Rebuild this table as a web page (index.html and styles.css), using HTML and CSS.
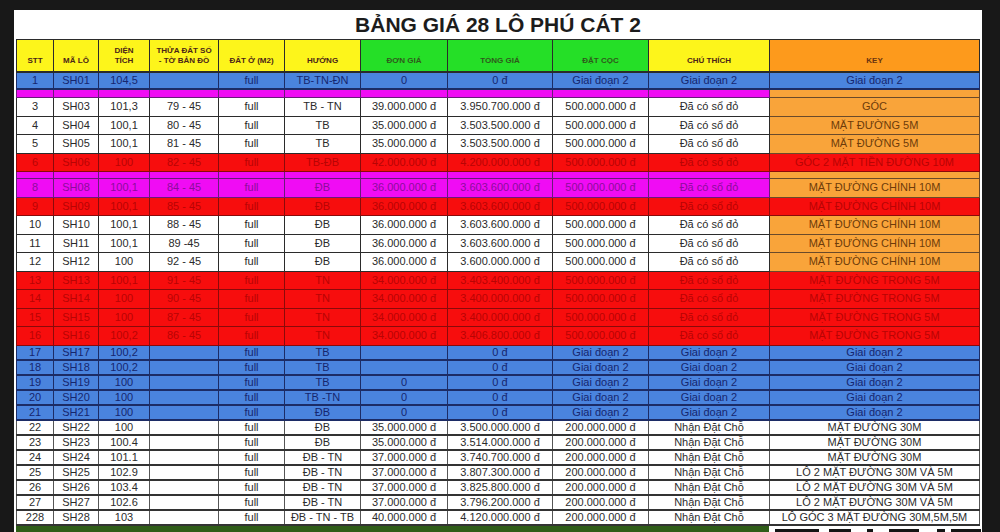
FILE: index.html
```html
<!DOCTYPE html>
<html lang="vi">
<head>
<meta charset="utf-8">
<title>Bảng giá 28 lô Phú Cát 2</title>
<link rel="stylesheet" href="styles.css">
</head>
<body>
<div class="sheet">
  <div class="title">BẢNG GIÁ 28 LÔ PHÚ CÁT 2</div>
  <table class="grid">
    <colgroup>
      <col style="width:37px"><col style="width:45px"><col style="width:51px"><col style="width:69px"><col style="width:66px"><col style="width:76px"><col style="width:87px"><col style="width:105px"><col style="width:96px"><col style="width:121px"><col style="width:210px">
    </colgroup>
    <thead>
      <tr class="head">
        <th class="hy">STT</th>
        <th class="hy">MÃ LÔ</th>
        <th class="hy">DIỆN<br>TÍCH</th>
        <th class="hy">THỬA ĐẤT SỐ<br>- TỜ BẢN ĐỒ</th>
        <th class="hy">ĐẤT Ở (M2)</th>
        <th class="hy">HƯỚNG</th>
        <th class="hg">ĐƠN GIÁ</th>
        <th class="hg">TỔNG GIÁ</th>
        <th class="hg">ĐẶT CỌC</th>
        <th class="hy">CHÚ THÍCH</th>
        <th class="ho">KEY</th>
      </tr>
    </thead>
    <tbody>
      <tr class="blue r17"><td>1</td><td>SH01</td><td>104,5</td><td></td><td>full</td><td>TB-TN-ĐN</td><td>0</td><td>0 đ</td><td>Giai đoạn 2</td><td>Giai đoạn 2</td><td>Giai đoạn 2</td></tr>
      <tr class="purple thin9"><td></td><td></td><td></td><td></td><td></td><td></td><td></td><td></td><td></td><td></td><td class="k-orange"></td></tr>
      <tr class="white mid"><td>3</td><td>SH03</td><td>101,3</td><td>79 - 45</td><td>full</td><td>TB - TN</td><td>39.000.000 đ</td><td>3.950.700.000 đ</td><td>500.000.000 đ</td><td>Đã có sổ đỏ</td><td class="k-orange">GÓC</td></tr>
      <tr class="white mid"><td>4</td><td>SH04</td><td>100,1</td><td>80 - 45</td><td>full</td><td>TB</td><td>35.000.000 đ</td><td>3.503.500.000 đ</td><td>500.000.000 đ</td><td>Đã có sổ đỏ</td><td class="k-orange">MẶT ĐƯỜNG 5M</td></tr>
      <tr class="white mid"><td>5</td><td>SH05</td><td>100,1</td><td>81 - 45</td><td>full</td><td>TB</td><td>35.000.000 đ</td><td>3.503.500.000 đ</td><td>500.000.000 đ</td><td>Đã có sổ đỏ</td><td class="k-orange">MẶT ĐƯỜNG 5M</td></tr>
      <tr class="red mid"><td>6</td><td>SH06</td><td>100</td><td>82 - 45</td><td>full</td><td>TB-ĐB</td><td>42.000.000 đ</td><td>4.200.000.000 đ</td><td>500.000.000 đ</td><td>Đã có sổ đỏ</td><td>GÓC 2 MẶT TIỀN ĐƯỜNG 10M</td></tr>
      <tr class="purple thin7"><td></td><td></td><td></td><td></td><td></td><td></td><td></td><td></td><td></td><td></td><td class="k-orange"></td></tr>
      <tr class="purple mid"><td>8</td><td>SH08</td><td>100,1</td><td>84 - 45</td><td>full</td><td>ĐB</td><td>36.000.000 đ</td><td>3.603.600.000 đ</td><td>500.000.000 đ</td><td>Đã có sổ đỏ</td><td class="k-orange">MẶT ĐƯỜNG CHÍNH 10M</td></tr>
      <tr class="red mid"><td>9</td><td>SH09</td><td>100,1</td><td>85 - 45</td><td>full</td><td>ĐB</td><td>36.000.000 đ</td><td>3.603.600.000 đ</td><td>500.000.000 đ</td><td>Đã có sổ đỏ</td><td>MẶT ĐƯỜNG CHÍNH 10M</td></tr>
      <tr class="white mid"><td>10</td><td>SH10</td><td>100,1</td><td>88 - 45</td><td>full</td><td>ĐB</td><td>36.000.000 đ</td><td>3.603.600.000 đ</td><td>500.000.000 đ</td><td>Đã có sổ đỏ</td><td class="k-orange">MẶT ĐƯỜNG CHÍNH 10M</td></tr>
      <tr class="white mid"><td>11</td><td>SH11</td><td>100,1</td><td>89 -45</td><td>full</td><td>ĐB</td><td>36.000.000 đ</td><td>3.603.600.000 đ</td><td>500.000.000 đ</td><td>Đã có sổ đỏ</td><td class="k-orange">MẶT ĐƯỜNG CHÍNH 10M</td></tr>
      <tr class="white mid"><td>12</td><td>SH12</td><td>100</td><td>92 - 45</td><td>full</td><td>ĐB</td><td>36.000.000 đ</td><td>3.600.000.000 đ</td><td>500.000.000 đ</td><td>Đã có sổ đỏ</td><td class="k-orange">MẶT ĐƯỜNG CHÍNH 10M</td></tr>
      <tr class="red mid"><td>13</td><td>SH13</td><td>100,1</td><td>91 - 45</td><td>full</td><td>TN</td><td>34.000.000 đ</td><td>3.403.400.000 đ</td><td>500.000.000 đ</td><td>Đã có sổ đỏ</td><td>MẶT ĐƯỜNG TRONG 5M</td></tr>
      <tr class="red mid"><td>14</td><td>SH14</td><td>100</td><td>90 - 45</td><td>full</td><td>TN</td><td>34.000.000 đ</td><td>3.400.000.000 đ</td><td>500.000.000 đ</td><td>Đã có sổ đỏ</td><td>MẶT ĐƯỜNG TRONG 5M</td></tr>
      <tr class="red mid"><td>15</td><td>SH15</td><td>100</td><td>87 - 45</td><td>full</td><td>TN</td><td>34.000.000 đ</td><td>3.400.000.000 đ</td><td>500.000.000 đ</td><td>Đã có sổ đỏ</td><td>MẶT ĐƯỜNG TRONG 5M</td></tr>
      <tr class="red mid"><td>16</td><td>SH16</td><td>100,2</td><td>86 - 45</td><td>full</td><td>TN</td><td>34.000.000 đ</td><td>3.406.800.000 đ</td><td>500.000.000 đ</td><td>Đã có sổ đỏ</td><td>MẶT ĐƯỜNG TRONG 5M</td></tr>
      <tr class="blue low"><td>17</td><td>SH17</td><td>100,2</td><td></td><td>full</td><td>TB</td><td></td><td>0 đ</td><td>Giai đoạn 2</td><td>Giai đoạn 2</td><td>Giai đoạn 2</td></tr>
      <tr class="blue low"><td>18</td><td>SH18</td><td>100,2</td><td></td><td>full</td><td>TB</td><td></td><td>0 đ</td><td>Giai đoạn 2</td><td>Giai đoạn 2</td><td>Giai đoạn 2</td></tr>
      <tr class="blue low"><td>19</td><td>SH19</td><td>100</td><td></td><td>full</td><td>TB</td><td>0</td><td>0 đ</td><td>Giai đoạn 2</td><td>Giai đoạn 2</td><td>Giai đoạn 2</td></tr>
      <tr class="blue low"><td>20</td><td>SH20</td><td>100</td><td></td><td>full</td><td>TB -TN</td><td>0</td><td>0 đ</td><td>Giai đoạn 2</td><td>Giai đoạn 2</td><td>Giai đoạn 2</td></tr>
      <tr class="blue low"><td>21</td><td>SH21</td><td>100</td><td></td><td>full</td><td>ĐB</td><td>0</td><td>0 đ</td><td>Giai đoạn 2</td><td>Giai đoạn 2</td><td>Giai đoạn 2</td></tr>
      <tr class="plain low"><td>22</td><td>SH22</td><td>100</td><td></td><td>full</td><td>ĐB</td><td>35.000.000 đ</td><td>3.500.000.000 đ</td><td>200.000.000 đ</td><td>Nhận Đặt Chỗ</td><td>MẶT ĐƯỜNG 30M</td></tr>
      <tr class="plain low"><td>23</td><td>SH23</td><td>100.4</td><td></td><td>full</td><td>ĐB</td><td>35.000.000 đ</td><td>3.514.000.000 đ</td><td>200.000.000 đ</td><td>Nhận Đặt Chỗ</td><td>MẶT ĐƯỜNG 30M</td></tr>
      <tr class="plain low"><td>24</td><td>SH24</td><td>101.1</td><td></td><td>full</td><td>ĐB - TN</td><td>37.000.000 đ</td><td>3.740.700.000 đ</td><td>200.000.000 đ</td><td>Nhận Đặt Chỗ</td><td>MẶT ĐƯỜNG 30M</td></tr>
      <tr class="plain low"><td>25</td><td>SH25</td><td>102.9</td><td></td><td>full</td><td>ĐB - TN</td><td>37.000.000 đ</td><td>3.807.300.000 đ</td><td>200.000.000 đ</td><td>Nhận Đặt Chỗ</td><td>LÔ 2 MẶT ĐƯỜNG 30M VÀ 5M</td></tr>
      <tr class="plain low"><td>26</td><td>SH26</td><td>103.4</td><td></td><td>full</td><td>ĐB - TN</td><td>37.000.000 đ</td><td>3.825.800.000 đ</td><td>200.000.000 đ</td><td>Nhận Đặt Chỗ</td><td>LÔ 2 MẶT ĐƯỜNG 30M VÀ 5M</td></tr>
      <tr class="plain low"><td>27</td><td>SH27</td><td>102.6</td><td></td><td>full</td><td>ĐB - TN</td><td>37.000.000 đ</td><td>3.796.200.000 đ</td><td>200.000.000 đ</td><td>Nhận Đặt Chỗ</td><td>LÔ 2 MẶT ĐƯỜNG 30M VÀ 5M</td></tr>
      <tr class="plain low"><td>228</td><td>SH28</td><td>103</td><td></td><td>full</td><td>ĐB - TN - TB</td><td>40.000.000 đ</td><td>4.120.000.000 đ</td><td>200.000.000 đ</td><td>Nhận Đặt Chỗ</td><td>LÔ GÓC 3 MẶT ĐƯỜNG 30M,5M,5M</td></tr>
    </tbody>
  </table>
  <div class="foot">
    <div class="foot-green"></div>
    <div class="foot-key">
      <span class="blk b1"></span><span class="blk b2"></span><span class="blk b3"></span><span class="blk b4"></span><span class="blk b5"></span><span class="blk b6"></span>
    </div>
  </div>
</div>
</body>
</html>
```

FILE: styles.css
```css
html, body {
  margin: 0;
  padding: 0;
  height: 532px;
  overflow: hidden;
  background: #181818;
}

.sheet {
  margin: 10px 0 0 14px;
  width: 968px;
  height: 522px;
  background: #ffffff;
  padding-left: 2px;
  box-sizing: border-box;
  overflow: hidden;
  font-family: "Liberation Sans", Arial, sans-serif;
}

.title {
  height: 29px;
  line-height: 30px;
  text-align: center;
  font-size: 21px;
  font-weight: bold;
  color: #1c1c1c;
  padding-right: 2px;
}

.grid {
  border-collapse: collapse;
  table-layout: fixed;
  width: 963px;
}

.grid th,
.grid td {
  padding: 0;
  text-align: center;
  white-space: nowrap;
  overflow: hidden;
  border: 1px solid #2b2b2b;
  line-height: 1;
  box-sizing: border-box;
}

.grid td {
  font-size: 11px;
  color: #2a2a2a;
}

.head th {
  height: 32px;
  vertical-align: bottom;
  padding-bottom: 5px;
  font-size: 8px;
  font-weight: bold;
  line-height: 10px;
  color: #4a2418;
  border-bottom: 2px solid #2b2b2b;
}

.hy { background: #fdf51b; }
.hg { background: #25df27; color: #2f5a1c !important; }
.ho { background: #fd9a1c; color: #6a3410 !important; }

.r17 td { height: 17px; }
.thin9 td { height: 9px; }
.thin7 td { height: 7px; }
.mid td { height: 18.5px; }
.low td { height: 15px; }

.blue td {
  background: #4a84de;
  color: #16266e;
  border-color: #1c2c66;
  border-bottom: 2px solid #1c2c66;
}

.red td {
  background: #f70d0d;
  color: #b80404;
  border-color: #8a0a0a;
}

.purple td {
  background: #f00cf4;
  color: #8c0c9c;
  border-color: #6a1a7a;
}

.white td {
  background: #ffffff;
  color: #2a2a2a;
}

.plain td {
  background: #ffffff;
  color: #2c2c2c;
  border-bottom: 2px solid #333333;
  border-left-color: #555555;
  border-right-color: #555555;
}

.grid td.k-orange {
  background: #f9a43a;
  color: #6e3c0a;
  border-color: #6a4a2a;
}

.foot {
  display: flex;
  height: 8px;
}

.foot-green {
  flex: 0 0 753px;
  background: #2f5d18;
}

.foot-key {
  flex: 1;
  display: flex;
  align-items: flex-end;
  gap: 6px;
  padding: 0 8px 0 6px;
  background: #ffffff;
}

.blk {
  display: block;
  height: 5px;
  background: #141414;
}

.b1 { width: 44px; }
.b2 { width: 22px; margin-left: 4px; }
.b3 { width: 6px; margin-left: 10px; }
.b4 { width: 30px; margin-left: 10px; }
.b5 { width: 8px; margin-left: 12px; }
.b6 { width: 30px; }
```
